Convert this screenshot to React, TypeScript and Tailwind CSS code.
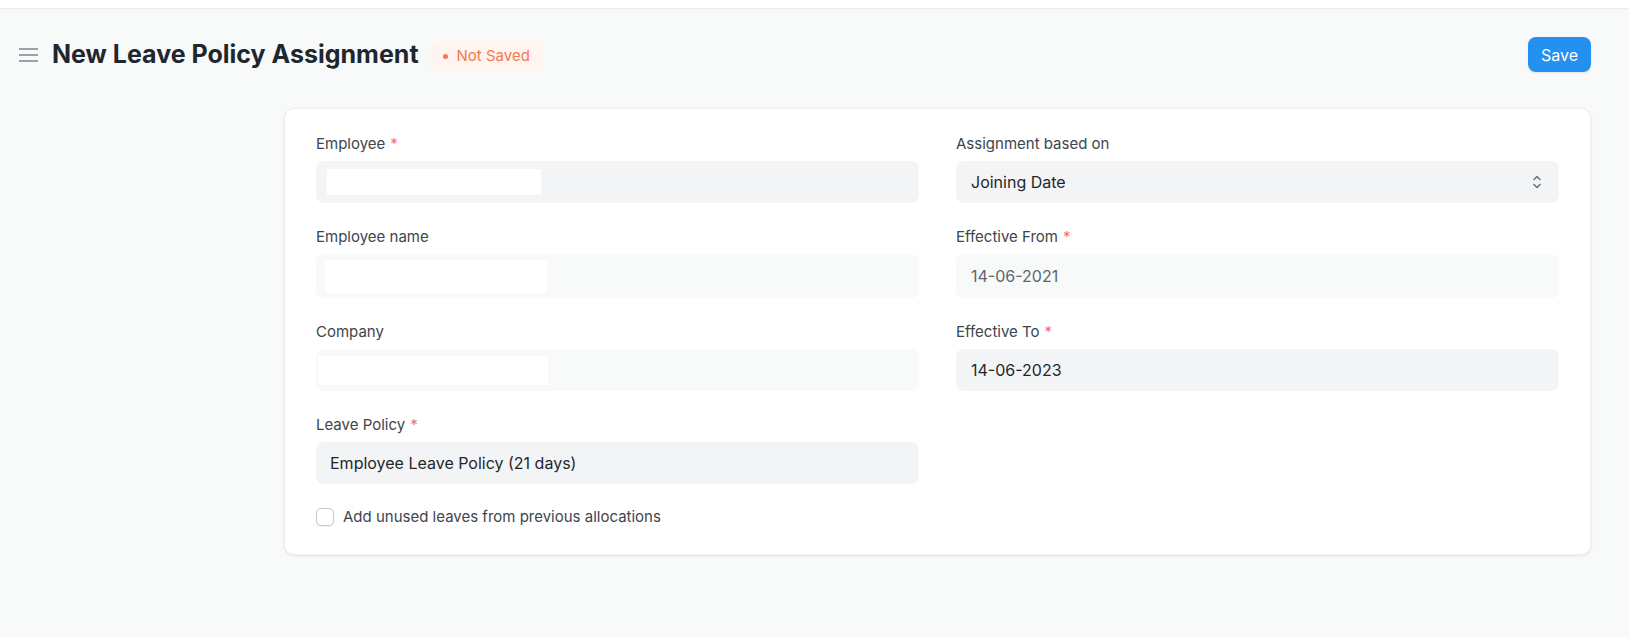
import React from 'react';

type FieldProps = {
  label: string;
  required?: boolean;
  children: React.ReactNode;
};

function Field({ label, required, children }: FieldProps) {
  return (
    <div className="flex flex-col">
      <div className="mb-[7px] text-[15px] leading-[21px] text-[#3d454d]">
        {label}
        {required && <span className="ml-[5px] text-[#f0706a]">*</span>}
      </div>
      {children}
    </div>
  );
}

function SelectArrows() {
  return (
    <svg width="10" height="18" viewBox="0 0 10 18" fill="none" stroke="#6b7480" strokeWidth="1.6" strokeLinecap="round" strokeLinejoin="round">
      <path d="M2 6.5 5 3.5 8 6.5" />
      <path d="M2 11.5 5 14.5 8 11.5" />
    </svg>
  );
}

export default function App() {
  return (
    <div className="min-h-[637px] w-full bg-[#f8f9f9] font-['Inter',sans-serif] text-[#1f272e]">
      {/* bottom of the navbar */}
      <div className="h-[8px] bg-white shadow-[0_1px_2px_rgba(0,0,0,0.07)]" />

      {/* page head */}
      <div className="mt-[29px] flex h-[35px] items-center justify-between pl-[19px] pr-[38px]">
        <div className="flex items-center">
          <svg width="19" height="16" viewBox="0 0 19 16" fill="none" stroke="#9aa1a9" strokeWidth="2">
            <path d="M0 2h19M0 8h19M0 14h19" />
          </svg>
          <h1 className="ml-[14px] text-[25px] font-bold leading-none text-[#1f272e]">
            New Leave Policy Assignment
          </h1>
          <div className="ml-[12px] mt-[3px] flex h-[29px] items-center rounded-[7px] bg-[#fff4ef] pl-[12px] pr-[13px] text-[15px] text-[#f27a50]">
            <span className="mr-[9px] h-[5px] w-[5px] rounded-full bg-[#f27a50]" />
            Not Saved
          </div>
        </div>
        <button className="h-[35px] w-[63px] rounded-[8px] bg-[#2490ef] text-[16px] text-white shadow-[0_1px_2px_rgba(0,0,0,0.1)]">
          Save
        </button>
      </div>

      {/* form card */}
      <div className="ml-[284px] mr-[38px] mt-[36px] rounded-[10px] border border-[#eef0f1] bg-white px-[31px] pb-[27px] pt-[24px] shadow-[0_1px_3px_rgba(0,0,0,0.09)]">
        <div className="grid grid-cols-2 gap-x-[37px]">
          <div className="flex flex-col gap-[23px]">
            <Field label="Employee" required>
              <div className="flex h-[42px] items-center rounded-[8px] bg-[#f3f4f5] pl-[11px]">
                <div className="h-[26px] w-[214px] bg-white" />
              </div>
            </Field>
            <Field label="Employee name">
              <div className="flex h-[44px] items-center rounded-[8px] bg-[#f8f9f9] pl-[9px]">
                <div className="h-[33px] w-[222px] bg-white" />
              </div>
            </Field>
            <Field label="Company">
              <div className="flex h-[42px] items-center rounded-[8px] bg-[#f8f9f9] pl-[2px]">
                <div className="h-[29px] w-[230px] bg-white" />
              </div>
            </Field>
            <Field label="Leave Policy" required>
              <div className="flex h-[42px] items-center rounded-[8px] bg-[#f3f4f5] pl-[14px] text-[16px] text-[#1f272e]">
                Employee Leave Policy (21 days)
              </div>
            </Field>
            <label className="-mt-[1px] flex h-[21px] items-center">
              <span className="h-[18px] w-[18px] rounded-[5px] border border-[#c3c8ce] bg-white shadow-[0_1px_1px_rgba(0,0,0,0.06)]" />
              <span className="ml-[9px] text-[15px] leading-[21px] text-[#3d454d]">
                Add unused leaves from previous allocations
              </span>
            </label>
          </div>

          <div className="flex flex-col gap-[23px]">
            <Field label="Assignment based on">
              <div className="flex h-[42px] items-center justify-between rounded-[8px] bg-[#f3f4f5] pl-[15px] pr-[17px] text-[16px] text-[#1f272e]">
                Joining Date
                <SelectArrows />
              </div>
            </Field>
            <Field label="Effective From" required>
              <div className="flex h-[44px] items-center rounded-[8px] bg-[#f8f9f9] pl-[15px] text-[16px] text-[#5c6670]">
                14-06-2021
              </div>
            </Field>
            <Field label="Effective To" required>
              <div className="flex h-[42px] items-center rounded-[8px] bg-[#f3f4f5] pl-[15px] text-[16px] text-[#1f272e]">
                14-06-2023
              </div>
            </Field>
          </div>
        </div>
      </div>
    </div>
  );
}
